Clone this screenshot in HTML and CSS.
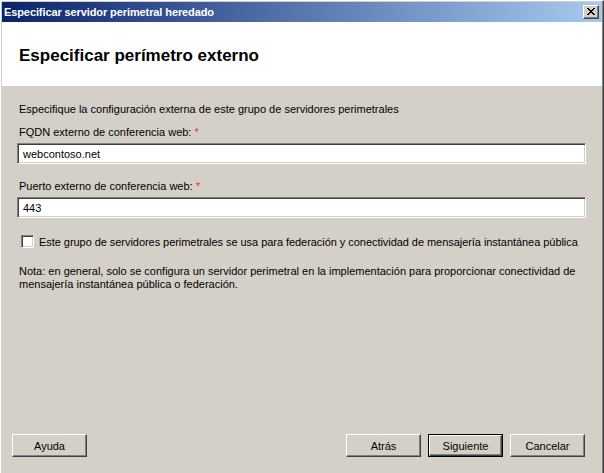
FILE: index.html
```html
<!DOCTYPE html>
<html lang="es">
<head>
<meta charset="utf-8">
<title>Especificar servidor perimetral heredado</title>
<link rel="stylesheet" href="styles.css">
</head>
<body>
<div class="window">
  <div class="titlebar">
    <span class="title">Especificar servidor perimetral heredado</span>
    <span class="close" aria-label="Cerrar">
      <svg width="8" height="7" viewBox="0 0 8 7"><path d="M0 0h2v1h1v1h2V1h1V0h2v1H7v1H6v1H5v1h1v1h1v1h1v1H6V6H5V5H3v1H2v1H0V6h1V5h1V4h1V3H2V2H1V1H0z" fill="#000"/></svg>
    </span>
  </div>
  <div class="header">
    <h1 class="heading">Especificar perímetro externo</h1>
  </div>
  <div class="content">
    <p class="intro">Especifique la configuración externa de este grupo de servidores perimetrales</p>
    <div class="field-label">FQDN externo de conferencia web: <span class="req">*</span></div>
    <div class="input">webcontoso.net</div>
    <div class="field-label second">Puerto externo de conferencia web: <span class="req">*</span></div>
    <div class="input">443</div>
    <div class="check-row">
      <span class="checkbox"></span>
      <span class="check-label">Este grupo de servidores perimetrales se usa para federación y conectividad de mensajería instantánea pública</span>
    </div>
    <p class="note">Nota: en general, solo se configura un servidor perimetral en la implementación para proporcionar conectividad de mensajería instantánea pública o federación.</p>
  </div>
  <div class="footer">
    <span class="btn">Ayuda</span>
    <span class="spacer"></span>
    <span class="btn">Atrás</span>
    <span class="btn default"><span class="btn-inner">Siguiente</span></span>
    <span class="btn">Cancelar</span>
  </div>
</div>
</body>
</html>
```

FILE: styles.css
```css
html, body {
  margin: 0;
  padding: 0;
  height: 100%;
  background: #d4d0c8;
}

body {
  font-family: "Liberation Sans", Arial, sans-serif;
  font-size: 11px;
  color: #000;
}

.window {
  box-sizing: border-box;
  height: 473px;
  display: flex;
  flex-direction: column;
  border-top: 1px solid #ffffff;
  border-left: 1px solid #ffffff;
  border-right: 1px solid #404040;
  padding: 1px 1px 0 1px;
  box-shadow: inset -1px 0 0 #808080;
}

.titlebar {
  height: 20px;
  display: flex;
  align-items: center;
  justify-content: space-between;
  background: linear-gradient(to right, #0a246a, #a6caf0);
  padding: 0 3px 0 2px;
}

.title {
  color: #fff;
  font-weight: bold;
  font-size: 11px;
  letter-spacing: -0.1px;
}

.close {
  box-sizing: border-box;
  width: 16px;
  height: 14px;
  background: #d4d0c8;
  border-top: 1px solid #fff;
  border-left: 1px solid #fff;
  border-right: 1px solid #404040;
  border-bottom: 1px solid #404040;
  box-shadow: inset -1px -1px 0 #808080;
  display: flex;
  align-items: center;
  justify-content: center;
  padding-bottom: 1px;
}

.header {
  box-sizing: border-box;
  height: 64px;
  background: #fff;
  display: flex;
  align-items: center;
  padding: 3px 0 0 17px;
}

.heading {
  margin: 0;
  font-size: 17px;
  font-weight: bold;
  letter-spacing: 0;
}

.content {
  flex: 1;
  padding: 17px 16px 0 15px;
}

.intro, .field-label, .note {
  margin: 0 0 0 2px;
  line-height: 13px;
}

.field-label {
  margin-top: 10px;
  margin-bottom: 4px;
}

.field-label.second {
  margin-top: 16px;
}

.req {
  color: #e8332a;
}

.input {
  box-sizing: border-box;
  height: 21px;
  background: #fff;
  border-top: 1px solid #808080;
  border-left: 1px solid #808080;
  border-right: 1px solid #fff;
  border-bottom: 1px solid #fff;
  box-shadow: inset 1px 1px 0 #404040, inset -1px -1px 0 #d4d0c8;
  padding: 0 5px;
  display: flex;
  align-items: center;
}

.check-row {
  display: flex;
  align-items: center;
  margin: 17px 0 0 4px;
  height: 13px;
}

.checkbox {
  box-sizing: border-box;
  width: 13px;
  height: 13px;
  background: #fff;
  border-top: 1px solid #808080;
  border-left: 1px solid #808080;
  border-right: 1px solid #fff;
  border-bottom: 1px solid #fff;
  box-shadow: inset 1px 1px 0 #404040, inset -1px -1px 0 #d4d0c8;
  margin-right: 5px;
}

.check-label {
  letter-spacing: -0.05px;
}

.note {
  margin-top: 17px;
}

.footer {
  display: flex;
  gap: 7px;
  padding: 0 17px 16px 10px;
}

.spacer {
  flex: 1;
}

.btn {
  box-sizing: border-box;
  width: 75px;
  height: 23px;
  display: flex;
  align-items: center;
  justify-content: center;
  border-top: 1px solid #fff;
  border-left: 1px solid #fff;
  border-right: 1px solid #404040;
  border-bottom: 1px solid #404040;
  box-shadow: inset -1px -1px 0 #808080;
  background: #d4d0c8;
}

.btn.default {
  border: 1px solid #000;
  box-shadow: none;
}

.btn-inner {
  box-sizing: border-box;
  width: 100%;
  height: 100%;
  display: flex;
  align-items: center;
  justify-content: center;
  border-top: 1px solid #fff;
  border-left: 1px solid #fff;
  border-right: 1px solid #404040;
  border-bottom: 1px solid #404040;
  box-shadow: inset -1px -1px 0 #808080;
}
```
